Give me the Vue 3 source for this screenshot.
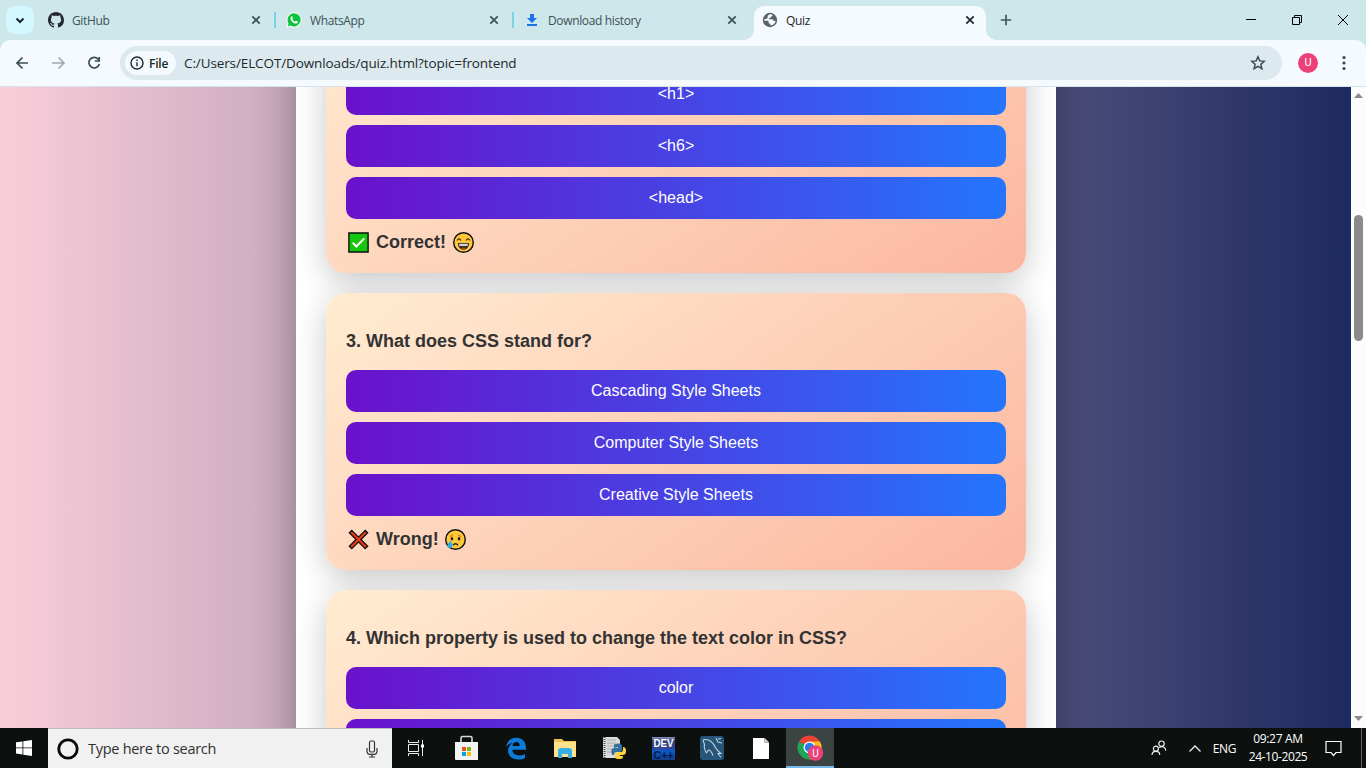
<script setup>
const tabs = [
  { id: 'github', title: 'GitHub' },
  { id: 'whatsapp', title: 'WhatsApp' },
  { id: 'download', title: 'Download history' },
  { id: 'quiz', title: 'Quiz', active: true },
]
const cards = [
  { id: 2, options: ['<h1>', '<h6>', '<head>'], result: 'Correct!', ok: true },
  { id: 3, question: '3. What does CSS stand for?', options: ['Cascading Style Sheets', 'Computer Style Sheets', 'Creative Style Sheets'], result: 'Wrong!', ok: false },
  { id: 4, question: '4. Which property is used to change the text color in CSS?', options: ['color', ''] },
]
</script>

<template>
  <div class="screen">
    <header class="tabstrip">
      <div class="search-tabs">
        <svg width="28" height="28" viewBox="0 0 28 28"><path d="M10.500 12.500 14 16l3.500-3.500" fill="none" stroke="#16282c" stroke-width="2" /></svg>
      </div>
      <div class="tabs">
        <div v-for="t in tabs" :key="t.id" class="tab" :class="{ active: t.active }">
          <svg v-if="t.id === 'github'" class="fav" viewBox="0 0 16 16"><path fill="#24292f" d="M8 0C3.58 0 0 3.58 0 8c0 3.54 2.29 6.53 5.47 7.59.4.07.55-.17.55-.38 0-.19-.01-.82-.01-1.49-2.01.37-2.53-.49-2.69-.94-.09-.23-.48-.94-.82-1.13-.28-.15-.68-.52-.01-.53.63-.01 1.08.58 1.23.82.72 1.21 1.87.87 2.33.66.07-.52.28-.87.51-1.07-1.78-.2-3.64-.89-3.64-3.95 0-.87.31-1.59.82-2.15-.08-.2-.36-1.02.08-2.12 0 0 .67-.21 2.2.82.64-.18 1.32-.27 2-.27s1.36.09 2 .27c1.53-1.04 2.2-.82 2.2-.82.44 1.1.16 1.92.08 2.12.51.56.82 1.27.82 2.15 0 3.07-1.87 3.75-3.65 3.95.29.25.54.73.54 1.48 0 1.07-.01 1.93-.01 2.2 0 .21.15.46.55.38A8 8 0 0 0 16 8c0-4.42-3.58-8-8-8Z" /></svg>
          <svg v-else-if="t.id === 'whatsapp'" class="fav" viewBox="0 0 16 16"><path d="M8.1.2a7.6 7.6 0 0 0-6.6 11.4L.4 15.7l4.2-1.1A7.6 7.6 0 1 0 8.1.2Z" fill="#fff" /><path d="M8.1 1.2a6.6 6.6 0 0 0-5.5 10.2l-.8 2.8 2.9-.7A6.6 6.6 0 1 0 8.1 1.2Z" fill="#09c33c" /><path d="M5.3 4.4c.4-.3.9-.3 1 .1l.6 1.4c.1.4-.6.9-.6 1.1.5 1.2 1.5 2.1 2.7 2.6.3 0 .8-.9 1.1-.8l1.5.7c.5.3 0 1.5-.6 1.8-2.5 1.3-6.5-2.3-6.5-4.9 0-.9.4-1.6.8-2Z" fill="#fff" /></svg>
          <svg v-else-if="t.id === 'download'" class="fav" viewBox="0 0 16 16"><path d="M6 2h4v4h3l-5 5-5-5h3ZM3 12h10v2H3Z" fill="#1a73e8" /></svg>
          <svg v-else class="fav" viewBox="0 0 16 16"><circle cx="8" cy="8" r="7.200" fill="#5f6368" /><path d="M7.500 2.300c1.500-.2 2.500.2 3.100.8 0 1.200-.5 1.700-1.900 1.700-.1 1-.7 1.500-1.700 1.500v.9h3c1.200 0 1.600.8 1.600 1.900h2.100c-.6 2.600-2.700 4.300-5.300 4.300v-1.600c-1.400 0-1.800-.6-1.800-1.800 0-.9-.4-1.300-1.400-1.300H2.400V7l2.100 0 1.100-1.200c-.1-1.600.5-2.700 1.900-3.500Z" fill="#f4fafd" /></svg>
          <span class="tab-title">{{ t.title }}</span>
          <svg width="10" height="10" viewBox="0 0 10 10"><path d="m1.300 1.300 7.400 7.400m0-7.400L1.300 8.700" :stroke="t.active ? '#1c292c' : '#3c5054'" stroke-width="1.700" /></svg>
        </div>
      </div>
      <svg class="plus" width="12" height="12" viewBox="0 0 12 12"><path d="M6 .8v10.400M.8 6h10.400" stroke="#41565a" stroke-width="1.700" /></svg>
      <svg class="winctl" width="110" height="20" viewBox="0 0 110 20" fill="none" stroke="#000" stroke-width="1"><path d="M2 9.500h10M48.500 7.500h7v7h-7zM50.500 7.500v-2h7v7h-2M94 5l10 10m0-10L94 15" /></svg>
    </header>

    <div class="toolbar">
      <svg class="nav" width="110" height="24" viewBox="0 0 110 24" fill="none" stroke-width="1.700"><path d="M23 12H12m5.500-5.500L12 12l5.500 5.500" stroke="#3a4e52" /><path d="M47 12h12m-5.500-5.500L59 12l-5.500 5.500" stroke="#a0aaad" /><path d="M93.500 8.500A5.300 5.300 0 1 0 94.300 13M94.200 6v4h-4.400" stroke="#3a4e52" /></svg>
      <div class="omnibox">
        <div class="chip">
          <svg width="14" height="14" viewBox="0 0 14 14"><circle cx="7" cy="7" r="6" fill="none" stroke="#1e2a2d" stroke-width="1.400" /><path d="M7 6.200v4M7 3.500v1.400" stroke="#1e2a2d" stroke-width="1.400" /></svg>
          <span>File</span>
        </div>
        <span class="url">C:/Users/ELCOT/Downloads/quiz.html?topic=frontend</span>
        <svg width="16" height="16" viewBox="0 0 16 16"><path d="m8 1.800 1.800 4.100 4.500.4-3.400 3 1 4.400L8 11.400l-3.900 2.300 1-4.400-3.400-3 4.500-.4Z" fill="none" stroke="#3c4b4f" stroke-width="1.500" /></svg>
      </div>
      <div class="avatar">U</div>
      <svg width="4" height="16" viewBox="0 0 4 16" fill="#364b4f"><circle cx="2" cy="2.500" r="1.600" /><circle cx="2" cy="8" r="1.600" /><circle cx="2" cy="13.500" r="1.600" /></svg>
    </div>

    <div class="viewport">
      <main class="page">
        <div class="quiz">
          <section v-for="c in cards" :key="c.id" class="card">
            <h3>{{ c.question }}</h3>
            <button v-for="o in c.options" :key="o" type="button">{{ o }}</button>
            <div v-if="c.result" class="result">
              <svg v-if="c.ok" class="emoji" viewBox="0 0 24 24"><path d="M2 2h20v20H2Z" fill="#16c60c" stroke="#111" stroke-width="1.500" /><path d="m6 12.300 3.800 3.900L18 7.700" fill="none" stroke="#fff" stroke-width="2.200" /></svg>
              <svg v-else class="emoji" viewBox="0 0 24 24"><path d="m5 2.500 7 7 7-7L21.500 5l-7 7 7 7-2.500 2.500-7-7-7 7L2.500 19l7-7-7-7Z" fill="#f03a17" stroke="#111" stroke-width="1.400" /></svg>
              <span>{{ c.result }}</span>
              <svg v-if="c.ok" class="emoji" viewBox="0 0 24 24"><circle cx="12" cy="12" r="10.200" fill="#ffc83d" stroke="#111" stroke-width="1.500" /><path d="M5.300 10q2-3.600 4 0m5.400 0q2-3.600 4 0" fill="none" stroke="#3a260a" stroke-width="1.200" /><path d="M6.700 13h10.600q-.5 6-5.300 6t-5.300-6Z" fill="#402a32" stroke="#222" /><path d="M7.300 13.300h9.400l-.5 2.400H7.800Z" fill="#d5d5d5" /><path d="M9.500 18q2.500-1.700 5 0-2.500 1.500-5 0Z" fill="#f03a17" /></svg>
              <svg v-else class="emoji sad" viewBox="0 0 24 24"><circle cx="12" cy="12" r="10.200" fill="#ffc83d" stroke="#111" stroke-width="1.500" /><path d="M6 8.800q2.600-.3 3.300-2m8.700 2q-2.600-.3-3.300-2" fill="none" stroke="#d67d00" stroke-width="1.200" /><ellipse cx="8.300" cy="11.300" rx="1.400" ry="1.800" fill="#222" /><ellipse cx="15.700" cy="11.300" rx="1.400" ry="1.800" fill="#222" /><path d="M9.500 18q2.500-3 5 0" fill="none" stroke="#222" stroke-width="1.500" /><path d="M6.800 13.200q-6.600 7.300-.7 7.300 5.200-.4.700-7.300Z" fill="#28afea" /></svg>
            </div>
          </section>
        </div>
      </main>
      <div class="scrollbar">
        <svg width="15" height="641" viewBox="0 0 15 641" fill="#8b8b8b"><path d="M3 11h9L7.500 6ZM3 629h9l-4.500 5Z" /><rect x="3" y="128" width="9" height="126" rx="4.500" /></svg>
      </div>
    </div>

    <footer class="taskbar">
      <div class="start"><svg width="16" height="16" viewBox="0 0 16 16" fill="#fff"><path d="M0 2.300 6.500 1.400v6.100H0ZM7.300 1.300 16 0v7.500H7.300ZM0 8.300h6.500v6.200L0 13.600ZM7.300 8.300H16V16l-8.700-1.200Z" /></svg></div>
      <div class="search">
        <svg width="22" height="22" viewBox="0 0 22 22"><circle cx="11" cy="11" r="9.200" fill="none" stroke="#080808" stroke-width="2.800" /></svg>
        <span>Type here to search</span>
        <svg width="12" height="18" viewBox="0 0 12 18" fill="none" stroke="#333" stroke-width="1.200"><rect x="3.500" y="1" width="5" height="11" rx="1.500" /><path d="M1 8v3q0 3.300 3 3.300h4q3 0 3-3.300V8M6 14.300V17M3 17h6" /></svg>
      </div>
      <div class="app"><svg class="taskview" width="18" height="16" viewBox="0 0 18 16" fill="none" stroke="#eee"><path d="M1.500 0v2.500h10V0M1.500 16v-2.500h10V16M1.500 4.500h10v7h-10zM15.500 0v16" /><path d="M14 4.500h3v3h-3z" fill="#fff" stroke="none" /></svg></div>
      <div class="app"><svg class="shift" width="23" height="26" viewBox="0 0 23 26"><path d="M6 8V3q0-1.500 1.500-1.500h8Q17 1.500 17 3v5" fill="none" stroke="#d8d8d8" stroke-width="1.600" /><path d="M0 7h23v18H1q-1 0-1-1Z" fill="#f3f3f3" /><path d="M7 12h4v4H7Z" fill="#f25022" /><path d="M12 12h4v4h-4Z" fill="#7fba00" /><path d="M7 17h4v4H7Z" fill="#00a4ef" /><path d="M12 17h4v4h-4Z" fill="#ffb900" /></svg></div>
      <div class="app"><svg class="shift" width="22" height="23" viewBox="0 0 22 23"><path d="M1 10C2 3.700 6.200.7 11.300.7c6.400 0 9.700 4.800 9.700 10.100v2H7.400c.2 4 3.300 5.700 6.900 5.700 2.400 0 4.400-.7 5.700-1.500V21c-1.800 1-4.100 1.600-6.800 1.600C6.800 22.600 3 18.500 3 13.800c0-3.500 1.900-6.400 4.900-7.800C5 6.300 2.800 7.600 1 10Zm6.500-1h7.200c0-2.600-1.200-4-3.400-4-2 0-3.400 1.600-3.800 4Z" fill="#0b7bd8" /></svg></div>
      <div class="app"><svg class="shift" width="22" height="20" viewBox="0 0 22 20"><path d="M0 1h8l2 2h12v16H0Z" fill="#f0c24c" /><path d="M0 4h22v15H0Z" fill="#ffe08b" /><path d="M4 20v-7q0-3 3-3h8q3 0 3 3v7h-4v-4H8v4Z" fill="#35b0e6" /></svg></div>
      <div class="app"><svg width="24" height="24" viewBox="0 0 24 24"><path d="M1 1h14l3 3v18H1Z" fill="#ddd" /><path d="M2.500 1v21" stroke="#555" stroke-dasharray="1 1" stroke-width="2" /><path d="M5 4h9M5 7h9M5 10h7M5 13h5M5 16h5" stroke="#aaa" /><path d="M12 12V9q0-1.500 4-1.500T20 10v4q0 2-3 2h-2q-3 0-3 3h-2q-2-7 2-7h4v-1Z" fill="#34719f" /><path d="M21 11q3 0 3 4 0 4-3 4h-3v1h3v1q0 2-4 2t-4-2v-3q0-2 3-2h3q2 0 2-3Z" fill="#ffd242" /></svg></div>
      <div class="app"><svg class="shift" width="23" height="23" viewBox="0 0 23 23"><defs><linearGradient id="dev" x2="0" y2="1"><stop stop-color="#8790b8" /><stop offset=".2" stop-color="#334077" /><stop offset=".52" stop-color="#344596" /><stop offset=".57" stop-color="#075cce" /><stop offset="1" stop-color="#123d8c" /></linearGradient></defs><path d="M0 0h23v23H0Z" fill="url(#dev)" /><text x="1.500" y="10" class="devtext" fill="#fff" textLength="20" lengthAdjust="spacingAndGlyphs">DEV</text><text x="1.500" y="21.500" class="devtext" fill="#061943" textLength="20" lengthAdjust="spacingAndGlyphs">C++</text></svg></div>
      <div class="app"><svg width="24" height="24" viewBox="0 0 24 24"><rect width="24" height="24" rx="3" fill="#265579" /><path d="M6.500 17Q3.500 12 4.500 8 1.500 3 5.500 3.500c4 0 8 4 10 8 1.500 3.500 3.500 4 5.500 6h-3l3 4M6.500 17l2-3q2.500 0 4.500 5.500M16 2l2 4 4 1M18 3l3-.5" fill="none" stroke="#bed2df" stroke-width="1.100" /></svg></div>
      <div class="app"><svg width="16" height="21" viewBox="0 0 16 21"><path d="M0 0h11.500L16 4.500V21H0Z" fill="#fff" /><path d="M11.500 0v4.500H16" fill="#d2d2d2" stroke="#888" stroke-width=".6" /></svg></div>
      <div class="app current">
        <svg width="28" height="28" viewBox="0 0 28 28"><path d="M12.500 12.500 2.100 6.500A12 12 0 0 1 22.900 6.500Z" fill="#ea4335" /><path d="M12.500 12.500 22.900 6.500A12 12 0 0 1 12.500 24.500Z" fill="#fbc116" /><path d="M12.500 12.500V24.500A12 12 0 0 1 2.100 6.500Z" fill="#20a455" /><path d="M12 6.500h10.900l-4 5Z" fill="#fbc116" /><circle cx="12.500" cy="12.500" r="6" fill="#fff" /><circle cx="12.500" cy="12.500" r="4.700" fill="#287bea" /><circle cx="18.500" cy="18" r="7.700" fill="#ec407a" /><text x="18.500" y="21.500" text-anchor="middle" class="badge" fill="#fff">U</text></svg>
      </div>
      <div class="tray">
        <svg width="16" height="16" viewBox="0 0 16 16" fill="none" stroke="#eee" stroke-width="1.200"><circle cx="10.500" cy="3.700" r="2.700" /><circle cx="4.900" cy="8.700" r="2.500" /><path d="M1 15q0-3.700 3.900-3.700T8.700 15M8.200 7.500q5.600-2.600 6.700 3.200" /></svg>
        <svg width="12" height="7" viewBox="0 0 12 7" fill="none" stroke="#eee" stroke-width="1.300"><path d="m.5 6.500 5.500-5.500 5.500 5.500" /></svg>
        <span class="lang">ENG</span>
        <div class="clock"><span>09:27 AM</span><span class="date">24-10-2025</span></div>
        <svg class="note" width="17" height="17" viewBox="0 0 17 17" fill="none" stroke="#fff" stroke-width="1.200"><path d="M1 1.500h15v11h-5L8.500 15.500 6 12.500H1Z" /></svg>
        <i class="peek"></i>
      </div>
    </footer>
  </div>
</template>

<style>
html, body { margin: 0; overflow: hidden; }
</style>
<style scoped>
* { box-sizing: border-box; }
svg { display: block; flex: none; }
.screen { width: 1366px; height: 768px; display: flex; flex-direction: column; overflow: hidden; background: #cee7eb; font-family: "Open Sans", "Noto Sans", sans-serif; }
.tabstrip { height: 40px; flex: none; display: flex; padding-left: 6px; }
.search-tabs { width: 28px; height: 28px; margin-top: 6px; border-radius: 9px; background: #d3f8ff; }
.tabs { display: flex; margin-left: 6px; height: 34px; margin-top: 6px; }
.tab { position: relative; width: 238px; padding: 0 17px 6px 8px; display: flex; align-items: center; font-size: 12px; letter-spacing: -.36px; color: #3b5156; }
.tab:nth-child(1)::after, .tab:nth-child(2)::after { content: ""; position: absolute; right: 2px; top: 6px; width: 2px; height: 16px; background: #76d5e4; }
.fav { width: 16px; height: 16px; }
.tab-title { margin-left: 8px; flex: 1; white-space: nowrap; }
.active { background: #f4fafd; width: 232px; border-radius: 10px 10px 0 0; padding-right: 11px; color: #1a2528; }
.active::before, .active::after { content: ""; position: absolute; bottom: 0; width: 10px; height: 10px; }
.active::before { left: -10px; background: radial-gradient(circle at 0 0, transparent 9.500px, #f4fafd 10px); }
.active::after { right: -10px; background: radial-gradient(circle at 100% 0, transparent 9.500px, #f4fafd 10px); }
.plus { margin: 14px 0 0 14px; }
.winctl { margin: 10px 12px 0 auto; }
.toolbar { height: 47px; flex: none; display: flex; align-items: center; background: #f4fafd; border-radius: 10px 10px 0 0; border-bottom: 1px solid #d5e4e8; padding: 0 20px 0 5px; }
.nav { margin-right: 5px; }
.omnibox { width: 1162px; flex: none; height: 34px; border-radius: 17px; background: #dceaef; display: flex; align-items: center; padding: 0 16px 0 5px; }
.chip { width: 51px; height: 24px; border-radius: 12px; background: #f4fafd; display: flex; align-items: center; gap: 5px; padding-left: 5px; font-size: 12px; font-weight: 600; letter-spacing: -.2px; color: #1a2528; }
.url { margin-left: 8px; flex: 1; font-size: 13.500px; letter-spacing: -.11px; color: #20292c; white-space: nowrap; }
.avatar { width: 20px; height: 20px; flex: none; margin: 0 24px 0 16px; border-radius: 50%; background: #ec407a; color: #fff; font: 11px/20px Roboto, sans-serif; text-align: center; }
.viewport { height: 641px; flex: none; display: flex; overflow: hidden; }
.page { width: 1351px; height: 641px; overflow: hidden; background: linear-gradient(to right, #f9ced9, #1d2a60); padding-left: 296px; }
.quiz { width: 760px; height: 1200px; margin-top: -240px; padding: 149px 30px 0; background: #fff; box-shadow: 0 0 40px rgba(0, 0, 0, .3); }
.card { width: 700px; height: 277px; margin-bottom: 20px; padding: 20px; border-radius: 20px; background: linear-gradient(145deg, #ffecd2, #fcb69f); box-shadow: 0 8px 32px rgba(0, 0, 0, .22); font-family: "Liberation Sans", Arial, sans-serif; color: #333; }
.card h3 { margin: 18px 0 18px; height: 21px; font-size: 18px; line-height: 20px; }
.card button { display: block; width: 660px; height: 42px; margin: 0 0 10px; padding: 0; border: 0; border-radius: 10px; background: linear-gradient(to right, #6a11cb, #2575fc); color: #fff; font: 16px/42px "Liberation Sans", Arial, sans-serif; }
.result { display: flex; align-items: center; height: 24px; padding-left: 1px; gap: 6px; margin-top: 11px; font-size: 18px; font-weight: 700; }
.emoji { width: 23px; height: 23px; }
.sad { margin-left: -1px; }
.scrollbar { width: 15px; background: #fcfcfc; }
.taskbar { height: 40px; flex: none; display: flex; align-items: center; background: #0c100f; color: #fff; }
.start { width: 48px; display: flex; justify-content: center; }
.search { width: 344px; height: 40px; background: #f1f1f1; border-top: 1px solid #bbb; display: flex; align-items: center; padding: 0 14px 0 9px; color: #303030; }
.search span { flex: 1; margin-left: 9px; font-size: 14.500px; letter-spacing: -.28px; }
.app { width: 49.250px; height: 40px; display: flex; align-items: center; justify-content: center; }
.taskview { margin-right: 1px; }
.shift { margin-left: 1.500px; }
.current { width: 48px; background: #3c4343; border-bottom: 2px solid #76b9ed; padding: 3px 0 0 2px; }
.devtext { font: bold 10px "Liberation Sans", sans-serif; }
.badge { font: 10px Roboto, sans-serif; }
.tray { margin-left: auto; height: 40px; display: flex; align-items: center; font-size: 12px; }
.tray svg:nth-child(2) { margin-left: 22px; }
.lang { margin-left: 12px; letter-spacing: -.4px; }
.clock { width: 60px; margin-left: 12px; display: flex; flex-direction: column; align-items: center; line-height: 18px; white-space: nowrap; letter-spacing: -.3px; }
.date { letter-spacing: -.4px; }
.note { margin-left: 17px; }
.peek { width: 1px; height: 40px; background: #626565; margin: 0 4px 0 19px; }
</style>
